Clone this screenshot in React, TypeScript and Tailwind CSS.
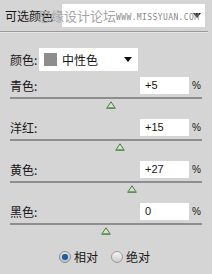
import React from "react";

const cjk = { fontFamily: '"Noto Sans CJK SC", "Noto Sans", sans-serif' };
const num = { fontFamily: '"Liberation Sans", Arial, sans-serif' };

const rows = [
  { label: "青色:", value: "+5", v: 5 },
  { label: "洋红:", value: "+15", v: 15 },
  { label: "黄色:", value: "+27", v: 27 },
  { label: "黑色:", value: "0", v: 0 },
];

function Arrow() {
  return (
    <svg width="8" height="5" viewBox="0 0 8 5">
      <path d="M0 0 H8 L4 5 Z" fill="#111" />
    </svg>
  );
}

function Thumb() {
  return (
    <svg width="10" height="8" viewBox="0 0 10 8">
      <path d="M5 0.8 L9.3 7.3 H0.7 Z" fill="#cfe6c8" stroke="#4d7a47" strokeWidth="1" strokeLinejoin="round" />
      <path d="M2.2 6.6 H7.8" stroke="#6f9b68" strokeWidth="1" />
    </svg>
  );
}

export default function App() {
  return (
    <div className="relative w-[212px] h-[274px] overflow-hidden bg-[#d5d5d5] text-[#161616]" style={cjk}>
      {/* header */}
      <div className="flex items-center pt-[4px]">
        <div className="w-[62px] pl-[5px] text-[12px] leading-[23px] whitespace-nowrap">可选颜色</div>
        <div className="w-[143px] h-[23px] bg-white flex items-center justify-end pr-[4px]">
          <Arrow />
        </div>
      </div>
      <div className="mt-[4px] w-[208px] h-px bg-[#9a9a9a]" />
      <div className="w-[208px] h-px bg-[#e6e6e6]" />

      {/* colour select */}
      <div className="mt-[15px] flex items-center pl-[10px]">
        <div className="w-[29px] text-[12px] leading-[23px]">颜色:</div>
        <div className="w-[99px] h-[23px] bg-white flex items-center pl-[5px] pr-[6px]">
          <div className="w-[13px] h-[13px] bg-[#8d8d8d]" />
          <div className="ml-[5px] flex-1 text-[12px] leading-[23px]">中性色</div>
          <Arrow />
        </div>
      </div>

      {/* sliders */}
      <div className="mt-[6px] flex flex-col">
        {rows.map((r, i) => (
          <div key={r.label} className={i === 0 ? "" : "mt-[10px]"}>
            <div className="flex items-center h-[17px]">
              <div className="w-[140px] pl-[10px] text-[12px] leading-[17px]">{r.label}</div>
              <div className="w-[49px] h-[17px] bg-white pl-[5px] text-[11px] leading-[17px]" style={num}>
                {r.value}
              </div>
              <div className="ml-[3px] text-[10px] leading-[17px]" style={num}>%</div>
            </div>
            <div className="mt-[3px] ml-[10px] w-[192px] h-[2px] bg-[#8e8e8e]" />
            <div className="relative ml-[10px] w-[192px] h-[8px] mt-[2px]">
              <div className="absolute top-0" style={{ left: 96 + (r.v * 96) / 100 - 5 }}>
                <Thumb />
              </div>
            </div>
          </div>
        ))}
      </div>

      {/* radios */}
      <div className="mt-[15px] flex items-center pl-[59px]">
        <div className="w-[12px] h-[12px] rounded-full border border-[#8a8a8a] bg-gradient-to-b from-[#e8e8e8] to-[#c4c4c4] flex items-center justify-center">
          <div className="w-[6px] h-[6px] rounded-full bg-[#1d5f9e] shadow-[0_0_1px_#5a9ad8]" />
        </div>
        <div className="ml-[3px] text-[12px] leading-[14px]">相对</div>
        <div className="ml-[13px] w-[12px] h-[12px] rounded-full border border-[#9a9a9a] bg-gradient-to-b from-[#f4f4f4] to-[#cdcdcd]" />
        <div className="ml-[3px] text-[12px] leading-[14px]">绝对</div>
      </div>

      {/* watermark */}
      <div className="absolute left-[38px] top-[9px] text-[13px] leading-[14px] text-[#a6a6a6] whitespace-nowrap pointer-events-none">
        思缘设计论坛
      </div>
      <div
        className="absolute left-[116px] top-[13px] text-[8px] leading-[9px] text-[#8a8a8a] whitespace-nowrap pointer-events-none tracking-[0.4px]"
        style={{ fontFamily: '"DejaVu Sans Mono", monospace' }}
      >
        WWW.MISSYUAN.COM
      </div>
    </div>
  );
}
